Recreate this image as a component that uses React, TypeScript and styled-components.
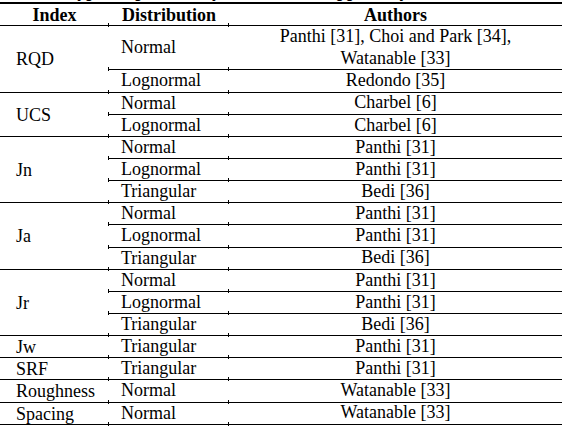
import React from "react";
import styled, {createGlobalStyle} from "styled-components";

interface IEntry {
    distribution: string
    authors: string[]
}

interface IGroup {
    index: string
    entries: IEntry[]
}

const groups: IGroup[] = [
    {
        index: "RQD", entries: [
            {distribution: "Normal", authors: ["Panthi [31], Choi and Park [34],", "Watanable [33]"]},
            {distribution: "Lognormal", authors: ["Redondo [35]"]},
        ]
    },
    {
        index: "UCS", entries: [
            {distribution: "Normal", authors: ["Charbel [6]"]},
            {distribution: "Lognormal", authors: ["Charbel [6]"]},
        ]
    },
    ...["Jn", "Ja", "Jr"].map(index => ({
        index, entries: [
            {distribution: "Normal", authors: ["Panthi [31]"]},
            {distribution: "Lognormal", authors: ["Panthi [31]"]},
            {distribution: "Triangular", authors: ["Bedi [36]"]},
        ]
    })),
    {index: "Jw", entries: [{distribution: "Triangular", authors: ["Panthi [31]"]}]},
    {index: "SRF", entries: [{distribution: "Triangular", authors: ["Panthi [31]"]}]},
    {index: "Roughness", entries: [{distribution: "Normal", authors: ["Watanable [33]"]}]},
    {index: "Spacing", entries: [{distribution: "Normal", authors: ["Watanable [33]"]}]},
];

const App = () => (
    <Page>
        <GlobalStyle/>
        <Caption>
            <CaptionText>Table 2. Types of probability distributions applied by several authors</CaptionText>
        </Caption>
        <Grid role="table">
            <HeadCell>Index</HeadCell>
            <HeadCell $tick>Distribution</HeadCell>
            <HeadCell $tick>Authors</HeadCell>
            {groups.map(group => {
                const span = group.entries.reduce((sum, e) => sum + e.authors.length, 0);
                return (
                    <React.Fragment key={group.index}>
                        <IndexCell $span={span}>{group.index}</IndexCell>
                        {group.entries.map((entry, i) => (
                            <React.Fragment key={i}>
                                <DistCell $span={entry.authors.length} $tick>{entry.distribution}</DistCell>
                                <AuthorCell $span={entry.authors.length} $tick>
                                    {entry.authors.map((line, j) => <AuthorLine key={j}>{line}</AuthorLine>)}
                                </AuthorCell>
                            </React.Fragment>
                        ))}
                    </React.Fragment>
                );
            })}
        </Grid>
    </Page>
);

const GlobalStyle = createGlobalStyle`
  html, body {
    margin: 0;
    background: #fff;
  }
`;

const Page = styled.div`
  width: 562px;
  height: 426px;
  overflow: hidden;
  background: #fff;
  color: #000;
  font-family: "Liberation Serif", "Times New Roman", serif;
  font-size: 18px;
`;

const Caption = styled.div`
  height: 2px;
  overflow: hidden;
`;

const CaptionText = styled.div`
  margin-top: -18px;
  padding-left: 2px;
  font-weight: bold;
  line-height: 18px;
  white-space: nowrap;
`;

const Grid = styled.div`
  display: grid;
  grid-template-columns: 109px 120px 1fr;
  grid-auto-rows: 22.15px;
  width: 562px;
  border-top: 2px solid #000;
`;

const Cell = styled.div<{ $span?: number; $tick?: boolean }>`
  position: relative;
  box-sizing: border-box;
  grid-row: span ${p => p.$span ?? 1};
  display: flex;
  flex-direction: column;
  justify-content: center;
  line-height: 21px;
  border-bottom: 1px solid #000;
  white-space: nowrap;

  &::after {
    content: "";
    display: ${p => p.$tick ? "block" : "none"};
    position: absolute;
    left: -1px;
    bottom: -2px;
    width: 1px;
    height: 4px;
    background: #000;
  }
`;

const HeadCell = styled(Cell)`
  font-weight: bold;
  align-items: center;
  padding-top: 1px;
`;

const IndexCell = styled(Cell)`
  padding: 2px 0 0 16px;
`;

const DistCell = styled(Cell)`
  padding-left: 12px;
`;

const AuthorCell = styled(Cell)`
  align-items: center;
`;

const AuthorLine = styled.div`
  line-height: 21.5px;
`;

export default App;
